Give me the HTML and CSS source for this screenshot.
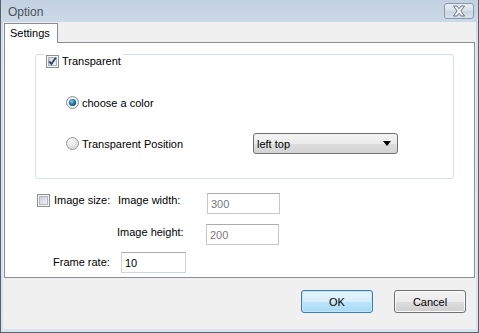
FILE: index.html
```html
<!DOCTYPE html>
<html lang="en">
<head>
    <meta charset="UTF-8">
    <title>Option</title>
    <link rel="stylesheet" href="styles.css">
</head>
<body>
    <div class="window">
        <div class="titlebar">
            <span class="title">Option</span>
            <div class="close-btn">
                <svg width="18" height="12" viewBox="0 0 18 12">
                    <path d="M3.5 1 L7 1 L9 3.8 L11 1 L14.5 1 L10.8 6 L14.5 11 L11 11 L9 8.2 L7 11 L3.5 11 L7.2 6 Z" fill="#f4f7fa" stroke="#5b6877" stroke-width="0.9" stroke-linejoin="round"/>
                </svg>
            </div>
        </div>

        <div class="client">
            <div class="tabs">
                <div class="tab">Settings</div>
            </div>

            <div class="panel">
                <div class="groupbox">
                    <div class="legend">
                        <svg class="check" width="13" height="13" viewBox="0 0 13 13">
                            <defs>
                                <linearGradient id="chkOn" x1="0" y1="0" x2="1" y2="1">
                                    <stop offset="0" stop-color="#cdd3dc"/>
                                    <stop offset="1" stop-color="#f4f6f8"/>
                                </linearGradient>
                            </defs>
                            <rect x="0.5" y="0.5" width="12" height="12" fill="#f6f6f6" stroke="#8e8f8f"/>
                            <rect x="2.5" y="2.5" width="8" height="8" fill="url(#chkOn)" stroke="#aeb4bd"/>
                            <path d="M3.2 6.4 L5.4 9 L9.8 2.8" fill="none" stroke="#2e3f66" stroke-width="1.7"/>
                        </svg>
                        <span>Transparent</span>
                    </div>

                    <div class="radio-row first">
                        <svg class="radio" width="13" height="13" viewBox="0 0 13 13">
                            <defs>
                                <radialGradient id="dotOn" cx="0.4" cy="0.35" r="0.7">
                                    <stop offset="0" stop-color="#8ad0ef"/>
                                    <stop offset="0.5" stop-color="#2a7fae"/>
                                    <stop offset="1" stop-color="#124563"/>
                                </radialGradient>
                            </defs>
                            <circle cx="6.5" cy="6.5" r="6" fill="#eef0f2" stroke="#8a8f96"/>
                            <circle cx="6.5" cy="6.5" r="3.6" fill="url(#dotOn)"/>
                        </svg>
                        <span class="radio-label">choose a color</span>
                    </div>

                    <div class="radio-row second">
                        <svg class="radio" width="13" height="13" viewBox="0 0 13 13">
                            <defs>
                                <radialGradient id="dotOff" cx="0.35" cy="0.3" r="0.8">
                                    <stop offset="0" stop-color="#fafafa"/>
                                    <stop offset="1" stop-color="#d4d4d4"/>
                                </radialGradient>
                            </defs>
                            <circle cx="6.5" cy="6.5" r="6" fill="url(#dotOff)" stroke="#9a9a9a"/>
                        </svg>
                        <span class="radio-label">Transparent Position</span>
                        <div class="select">
                            <span>left top</span>
                            <span class="arrow"></span>
                        </div>
                    </div>
                </div>

                <div class="size-block">
                    <div class="size-row">
                        <div class="size-check">
                            <svg class="check" width="13" height="13" viewBox="0 0 13 13">
                                <defs>
                                    <linearGradient id="chkOff" x1="0" y1="0" x2="1" y2="1">
                                        <stop offset="0" stop-color="#c9cdd2"/>
                                        <stop offset="1" stop-color="#f2f3f4"/>
                                    </linearGradient>
                                </defs>
                                <rect x="0.5" y="0.5" width="12" height="12" fill="#f6f6f6" stroke="#8e8f8f"/>
                                <rect x="2.5" y="2.5" width="8" height="8" fill="url(#chkOff)" stroke="#b4b8be"/>
                            </svg>
                            <span>Image size:</span>
                        </div>
                        <span class="field-label">Image width:</span>
                        <div class="textbox disabled">300</div>
                    </div>

                    <div class="size-row second">
                        <span class="field-label indent">Image height:</span>
                        <div class="textbox disabled">200</div>
                    </div>

                    <div class="size-row third">
                        <span class="frame-label">Frame rate:</span>
                        <div class="textbox frame">10</div>
                    </div>
                </div>
            </div>

            <div class="buttons">
                <div class="btn btn-ok">OK</div>
                <div class="btn btn-cancel">Cancel</div>
            </div>
        </div>
    </div>
</body>
</html>
```

FILE: styles.css
```css
body {
    margin: 0;
    font-family: 'Liberation Sans', Arial, sans-serif;
    font-size: 11px;
    color: #000;
    background: #ffffff;
}
.window {
    width: 479px;
    height: 333px;
    box-sizing: border-box;
    border: 1px solid #56636f;
    border-top: none;
    padding: 0 2px 3px 2px;
    background: linear-gradient(#c2d1e1, #d4dfea 40px, #d9e3ee);
    display: flex;
    flex-direction: column;
}
.titlebar {
    height: 22px;
    display: flex;
    align-items: center;
    padding-left: 5px;
    flex-shrink: 0;
}
.title {
    font-size: 12px;
    color: #46525f;
    margin-top: 1px;
}
.close-btn {
    margin-left: auto;
    margin-right: 2px;
    width: 30px;
    height: 16px;
    box-sizing: border-box;
    border: 1px solid #8998aa;
    border-radius: 3px;
    background: linear-gradient(#e8eef5, #d6e0ea 50%, #c9d5e2 51%, #d8e2ec);
    display: flex;
    align-items: center;
    justify-content: center;
    margin-top: 3px;
    align-self: flex-start;
}
.client {
    flex: 1;
    background: #f0f0f0;
    display: flex;
    flex-direction: column;
}
.tabs {
    display: flex;
    padding-left: 1px;
    margin-top: 1px;
    position: relative;
    z-index: 1;
}
.tab {
    height: 20px;
    box-sizing: border-box;
    width: 54px;
    border: 1px solid #898c95;
    border-bottom: none;
    background: #ffffff;
    padding: 3px 0 0 5px;
    margin-bottom: -1px;
}
.panel {
    margin: 0 1px;
    height: 236px;
    box-sizing: border-box;
    border: 1px solid #898c95;
    background: #ffffff;
}
.groupbox {
    margin: 11px 0 0 30px;
    width: 419px;
    height: 125px;
    box-sizing: border-box;
    border: 1px solid #d5dfe5;
    border-radius: 3px;
}
.legend {
    display: inline-flex;
    align-items: center;
    gap: 3px;
    margin: -1px 0 0 8px;
    padding: 0 2px;
    height: 14px;
    background: #ffffff;
    vertical-align: top;
}
.check, .radio {
    flex-shrink: 0;
    display: block;
}
.radio-row {
    display: flex;
    align-items: center;
    padding-left: 30px;
    gap: 3px;
}
.radio-row.first {
    margin-top: 27px;
    height: 15px;
}
.radio-row.second {
    margin-top: 23px;
}
.radio-label {
    width: 168px;
}
.select {
    width: 145px;
    height: 21px;
    box-sizing: border-box;
    border: 1px solid #707070;
    border-radius: 3px;
    background: linear-gradient(#f3f3f3, #ebebeb 50%, #dddddd 51%, #d3d3d3);
    display: flex;
    align-items: center;
    padding: 0 6px 0 3px;
}
.arrow {
    margin-left: auto;
    width: 0;
    height: 0;
    border-left: 4px solid transparent;
    border-right: 4px solid transparent;
    border-top: 5px solid #000;
}
.size-block {
    padding-left: 32px;
}
.size-row {
    display: flex;
    align-items: flex-start;
}
.size-row:first-child {
    margin-top: 14px;
}
.size-row.second {
    margin-top: 10px;
}
.size-row.third {
    margin-top: 7px;
    align-items: center;
}
.size-check {
    display: flex;
    align-items: center;
    gap: 4px;
    width: 81px;
    height: 14px;
}
.field-label {
    width: 89px;
    line-height: 14px;
}
.field-label.indent {
    margin-left: 80px;
    margin-top: 1px;
}
.frame-label {
    margin-left: 16px;
    width: 68px;
    margin-top: -1px;
}
.textbox {
    width: 73px;
    height: 21px;
    box-sizing: border-box;
    border: 1px solid #c5c8cc;
    border-top-color: #abadb3;
    padding: 4px 0 0 3px;
    background: #ffffff;
}
.textbox.disabled {
    color: #7a7a7a;
}
.textbox.frame {
    width: 65px;
    border-color: #d2d6db;
    border-top-color: #abadb3;
}
.buttons {
    display: flex;
    justify-content: flex-end;
    gap: 21px;
    padding: 12px 10px 0 0;
}
.btn {
    width: 72px;
    height: 23px;
    box-sizing: border-box;
    border-radius: 3px;
    display: flex;
    align-items: center;
    justify-content: center;
}
.btn-ok {
    border: 1px solid #3c7fb1;
    background: linear-gradient(#e5f4fc, #d8eefb 50%, #bee6fd 51%, #a7d9f5);
    box-shadow: inset 0 0 0 1px #c3e6f8;
}
.btn-cancel {
    border: 1px solid #707070;
    background: linear-gradient(#f2f2f2, #ebebeb 50%, #dddddd 51%, #cfcfcf);
    box-shadow: inset 0 0 0 1px #fbfbfb;
}
```
